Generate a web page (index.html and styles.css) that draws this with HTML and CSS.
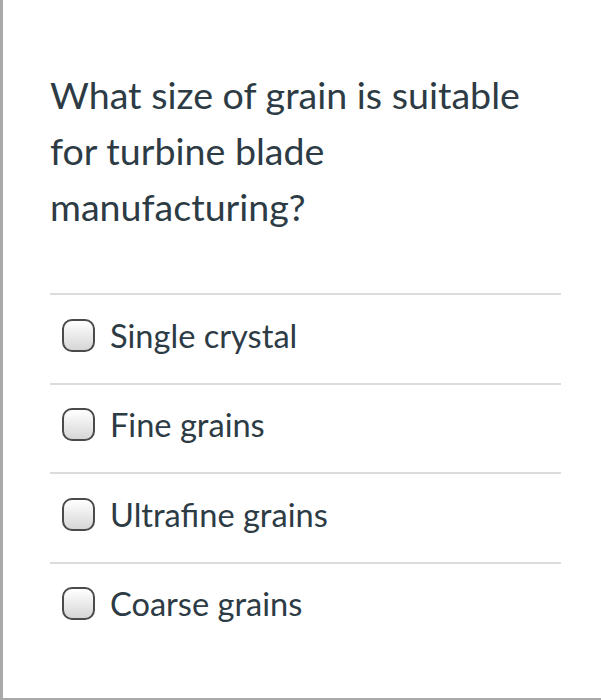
FILE: index.html
```html
<!DOCTYPE html>
<html>
<head>
<meta charset="utf-8">
<link rel="stylesheet" href="styles.css">
</head>
<body>
<div class="card">
  <div class="question">What size of grain is suitable for turbine blade manufacturing?</div>
  <div class="answers">
    <label class="answer"><span class="radio"></span><span class="label">Single crystal</span></label>
    <label class="answer"><span class="radio"></span><span class="label">Fine grains</span></label>
    <label class="answer"><span class="radio"></span><span class="label">Ultrafine grains</span></label>
    <label class="answer"><span class="radio"></span><span class="label">Coarse grains</span></label>
  </div>
</div>
</body>
</html>
```

FILE: styles.css
```css
html, body {
  margin: 0;
  padding: 0;
  background: #ffffff;
}
.card {
  box-sizing: border-box;
  width: 601px;
  height: 700px;
  border-left: 3px solid #a9a9a9;
  border-bottom: 2px solid #a9a9a9;
  padding: 67px 40px 0 47px;
  font-family: Lato, "Open Sans", sans-serif;
  color: #2d3b45;
}
.question {
  font-size: 37.6px;
  line-height: 56px;
  width: 490px;
}
.answers {
  margin-top: 58px;
  width: 511px;
}
.answer {
  box-sizing: border-box;
  display: flex;
  align-items: center;
  height: 89.5px;
  border-top: 2px solid #dcdcdc;
  padding: 0 0 7px 12px;
}
.radio {
  box-sizing: border-box;
  width: 33px;
  height: 33px;
  border: 2px solid #4a4a4a;
  border-radius: 10px;
  background: linear-gradient(#ffffff, #d6d6d6);
  margin-right: 15px;
  flex: none;
}
.label {
  font-size: 32.6px;
}
```
